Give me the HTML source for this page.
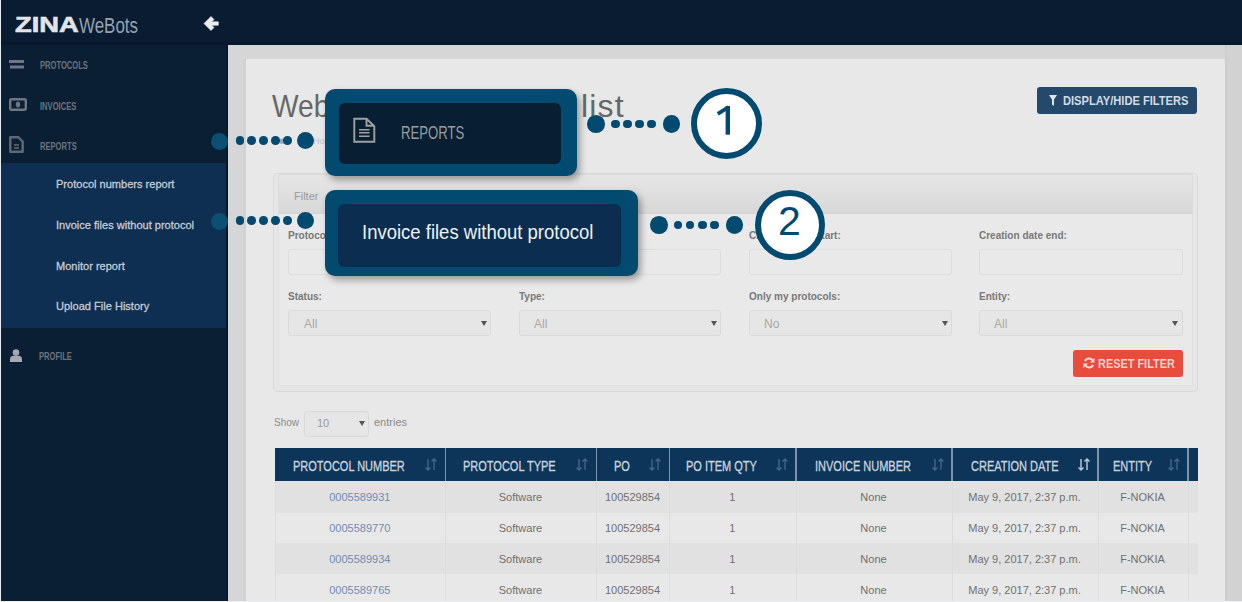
<!DOCTYPE html>
<html><head><meta charset="utf-8">
<style>
*{margin:0;padding:0;box-sizing:border-box}
html,body{width:1242px;height:602px;overflow:hidden;background:#d6d6d6;font-family:"Liberation Sans",sans-serif}
.a{position:absolute}
.t{position:absolute;white-space:nowrap;line-height:1}
#topbar{left:0;top:0;width:1242px;height:45px;background:#091c31}
#sidebar{left:0;top:45px;width:228px;height:557px;background:#0a1f34}
#leftline{left:0;top:0;width:1px;height:602px;background:#e8ecef}
#submenu{left:1px;top:163px;width:227px;height:165px;background:#0e2f51}
#scrollstrip{left:1225px;top:45px;width:17px;height:557px;background:#d2d2d2}
#card{left:246px;top:59px;width:979px;height:543px;background:#e8e8e8}
.side{color:#6c737c;font-size:11px;font-weight:bold;transform-origin:0 0;transform:scaleX(0.69)}
.sub{color:#c4ccd7;font-size:11.5px;font-weight:normal;-webkit-text-stroke:0.3px #c4ccd7;transform-origin:0 0;transform:scaleX(0.96)}
.lbl{color:#787878;font-size:11px;font-weight:bold;transform-origin:0 0;transform:scaleX(0.91)}
.inp{position:absolute;background:#e9e9e9;border:1px solid #dcdcdc;border-radius:3px}
.sel{position:absolute;background:#e6e6e6;border:1px solid #dadada;border-radius:3px}
.selv{position:absolute;color:#a8a8a8;font-size:12px;line-height:1}
.caret{position:absolute;width:0;height:0;border-left:3px solid transparent;border-right:3px solid transparent;border-top:5px solid #555}
.th{position:absolute;color:#c8d3de;font-size:15px;font-weight:normal;-webkit-text-stroke:0.35px #c8d3de;line-height:1;transform-origin:0 0;transform:scaleX(0.733)}
.td{position:absolute;color:#808080;font-size:11px;line-height:1;transform-origin:0 0}
.dot{position:absolute;border-radius:50%;background:#034a70}
</style></head><body>
<div id="topbar" class="a"></div>
<div id="sidebar" class="a"></div>
<div id="submenu" class="a"></div>
<div id="leftline" class="a"></div>
<div id="scrollstrip" class="a"></div>
<div class="a" style="left:1225px;top:45px;width:2px;height:557px;background:#cdcdcd"></div>
<div id="card" class="a"></div>
<div class="a" style="left:1px;top:42px;width:1241px;height:3px;background:#07182b"></div>
<div class="a" style="left:226px;top:45px;width:2px;height:557px;background:#06182b"></div>
<div class="a" style="left:243px;top:59px;width:3px;height:543px;background:#d2d2d2"></div>

<!-- logo -->
<div id="logo1" class="t" style="left:14.5px;top:14px;font-size:22px;font-weight:bold;color:#e2e4e8;transform-origin:0 0;transform:scaleX(1.24);-webkit-text-stroke:0.6px #e2e4e8">ZINA</div>
<div id="logo2" class="t" style="left:78.5px;top:14.5px;font-size:22px;color:#95a2b1;transform-origin:0 0;transform:scaleX(0.77)">WeBots</div>
<svg class="a" style="left:196px;top:10px" width="30" height="30" viewBox="196 10 30 30"><path d="M204 23.5L211 16.5L214 19.5L211.8 21.8H218.3V25.2H211.8L214 27.5L211 30.5Z" fill="#eceef0" stroke="#eceef0" stroke-width="0.6" stroke-linejoin="round"/></svg>
<!-- menu -->
<svg class="a" style="left:9px;top:59px" width="16" height="11" viewBox="0 0 16 11"><path d="M0 2.5H15M1 8H15" stroke="#6e7782" stroke-width="3"/></svg>
<div id="m1" class="t side" style="left:40px;top:60px">PROTOCOLS</div>
<svg class="a" style="left:9px;top:98px" width="18" height="13" viewBox="0 0 18 13"><rect x="1.2" y="1.2" width="15.6" height="10.6" rx="1.5" fill="none" stroke="#6e7782" stroke-width="2.4"/><ellipse cx="9" cy="6.5" rx="2.2" ry="3" fill="#6e7782"/></svg>
<div id="m2" class="t side" style="left:40px;top:101px">INVOICES</div>
<svg class="a" style="left:9px;top:136px" width="15" height="17" viewBox="0 0 15 17"><path d="M1.3 1.3H9.5L13.7 5.5V15.7H1.3Z" fill="none" stroke="#5f6873" stroke-width="2.4" stroke-linejoin="round"/><path d="M5 9H10M5 12H10" stroke="#4f5863" stroke-width="1.8"/></svg>
<div id="m3" class="t side" style="left:40px;top:141px">REPORTS</div>
<div id="s1" class="t sub" style="left:56px;top:179px">Protocol numbers report</div>
<div id="s2" class="t sub" style="left:56px;top:220px">Invoice files without protocol</div>
<div id="s3" class="t sub" style="left:56px;top:261px">Monitor report</div>
<div id="s4" class="t sub" style="left:56px;top:301px">Upload File History</div>
<svg class="a" style="left:9.5px;top:349px" width="12" height="13" viewBox="0 0 12 13"><circle cx="6" cy="3.6" r="3.3" fill="#a3a9b1"/><path d="M0 13V10.5Q0 6.8 3.5 6.8H8.5Q12 6.8 12 10.5V13Z" fill="#a3a9b1"/></svg>
<div id="m4" class="t side" style="left:39px;top:351px">PROFILE</div>

<!-- title -->
<div id="title1" class="t" style="left:272px;top:89.5px;font-size:32px;color:#676767;transform-origin:0 0;transform:scaleX(0.88)">Web</div>
<div id="title2" class="t" style="left:581px;top:89.5px;font-size:32px;color:#676767;letter-spacing:1.2px">list</div>
<div class="t" style="left:279px;top:136px;font-size:10px;color:#8fa6bf">&#9632;</div>
<div class="t" style="left:313px;top:137px;font-size:9px;color:#b9c3ce">Home</div>
<!-- display/hide -->
<div class="a" style="left:1037px;top:87px;width:160px;height:27px;background:#24496b;border-radius:3px"></div>
<svg class="a" style="left:1049px;top:95px" width="8" height="11" viewBox="0 0 8 11"><path d="M0 0H8L5 4.5V11L3 9.5V4.5Z" fill="#dfe6ee"/></svg>
<div id="dbtn" class="t" style="left:1062.5px;top:94px;font-size:13.5px;font-weight:bold;color:#d3dce6;transform-origin:0 0;transform:scaleX(0.824)">DISPLAY/HIDE FILTERS</div>
<!-- filter panel -->
<div class="a" style="left:273px;top:172.5px;width:925px;height:219px;border:1px solid #dadada;border-radius:4px;background:#e9e9e9;box-shadow:inset 0 0 0 5px #e6e6e6"></div>
<div class="a" style="left:278px;top:173.5px;width:915px;height:40.5px;background:linear-gradient(#e5e5e5,#d8d8d8);border:1px solid #dcdcdc;border-bottom-color:#d3d3d3;border-radius:3px 3px 0 0"></div>
<div class="a" style="left:278px;top:214px;width:915px;height:172px;border:1px solid #e0e0e0;border-top:none"></div>
<div id="filt" class="t" style="left:294px;top:191px;font-size:11px;color:#9a9a9a">Filter</div>
<div id="l1" class="t lbl" style="left:288px;top:230px">Protocol number:</div>
<div id="l3" class="t lbl" style="left:749px;top:230px">Creation date start:</div>
<div id="l4" class="t lbl" style="left:979px;top:230px">Creation date end:</div>
<div class="inp" style="left:288px;top:249px;width:203px;height:26px"></div>
<div class="inp" style="left:519px;top:249px;width:202px;height:26px"></div>
<div class="inp" style="left:749px;top:249px;width:203px;height:26px"></div>
<div class="inp" style="left:979px;top:249px;width:204px;height:26px"></div>
<div id="l5" class="t lbl" style="left:288px;top:291px">Status:</div>
<div id="l6" class="t lbl" style="left:519px;top:291px">Type:</div>
<div id="l7" class="t lbl" style="left:749px;top:291px">Only my protocols:</div>
<div id="l8" class="t lbl" style="left:979px;top:291px">Entity:</div>
<div class="sel" style="left:288px;top:310px;width:203px;height:26px"></div>
<div class="sel" style="left:519px;top:310px;width:202px;height:26px"></div>
<div class="sel" style="left:749px;top:310px;width:203px;height:26px"></div>
<div class="sel" style="left:979px;top:310px;width:204px;height:26px"></div>
<div class="selv" style="left:304px;top:318px">All</div>
<div class="selv" style="left:534px;top:318px">All</div>
<div class="selv" style="left:764px;top:318px">No</div>
<div class="selv" style="left:994px;top:318px">All</div>
<div class="caret" style="left:481px;top:321px"></div>
<div class="caret" style="left:711px;top:321px"></div>
<div class="caret" style="left:942px;top:321px"></div>
<div class="caret" style="left:1172px;top:321px"></div>
<!-- reset -->
<div class="a" style="left:1073px;top:350px;width:110px;height:27px;background:#e84c3d;border-radius:3px"></div>
<svg class="a" style="left:1083px;top:357px" width="12" height="12" viewBox="0 0 12 12"><path d="M10 4.5A4.3 4.3 0 0 0 2 4.2M2 7.5A4.3 4.3 0 0 0 10 7.8" stroke="#f6dcd8" stroke-width="2" fill="none"/><path d="M11.5 1V5.5H7Z M0.5 11V6.5H5Z" fill="#f6dcd8"/></svg>
<div id="rbtn" class="t" style="left:1097.5px;top:357.5px;font-size:12px;font-weight:bold;color:#f4d2cc;transform-origin:0 0;transform:scaleX(0.91)">RESET FILTER</div>
<!-- show entries -->
<div id="show" class="t" style="left:274px;top:417px;font-size:11px;color:#8a8a8a;transform-origin:0 0;transform:scaleX(0.91)">Show</div>
<div class="sel" style="left:304px;top:411px;width:65px;height:26px"></div>
<div class="selv" style="left:317px;top:418px;font-size:11px;color:#9a9a9a">10</div>
<div class="caret" style="left:359px;top:421px"></div>
<div id="entr" class="t" style="left:374px;top:417px;font-size:11px;color:#8a8a8a">entries</div>

<!-- table -->
<div class="a" style="left:274.7px;top:448px;width:923px;height:32.5px;background:#0d3459"></div>
<div class="a" style="left:444.5px;top:448px;width:1.5px;height:32.5px;background:#7f93a8"></div>
<div class="a" style="left:595.5px;top:448px;width:1.5px;height:32.5px;background:#7f93a8"></div>
<div class="a" style="left:668.5px;top:448px;width:1.5px;height:32.5px;background:#7f93a8"></div>
<div class="a" style="left:795.0px;top:448px;width:1.5px;height:32.5px;background:#7f93a8"></div>
<div class="a" style="left:951.0px;top:448px;width:1.5px;height:32.5px;background:#7f93a8"></div>
<div class="a" style="left:1097.0px;top:448px;width:1.5px;height:32.5px;background:#7f93a8"></div>
<div class="a" style="left:1187.0px;top:448px;width:1.5px;height:32.5px;background:#7f93a8"></div>
<div class="a" style="left:274.7px;top:480.5px;width:923px;height:32.299999999999955px;background:#e1e1e1"></div>
<div class="a" style="left:274.7px;top:512.8px;width:923px;height:29.800000000000068px;background:#e8e8e8"></div>
<div class="a" style="left:274.7px;top:542.6px;width:923px;height:31.600000000000023px;background:#e1e1e1"></div>
<div class="a" style="left:274.7px;top:574.2px;width:923px;height:30.799999999999955px;background:#e8e8e8"></div>
<div class="a" style="left:274.7px;top:480.5px;width:1px;height:122px;background:#dcdcdc"></div>
<div class="a" style="left:445px;top:480.5px;width:1px;height:122px;background:#dcdcdc"></div>
<div class="a" style="left:596px;top:480.5px;width:1px;height:122px;background:#dcdcdc"></div>
<div class="a" style="left:669px;top:480.5px;width:1px;height:122px;background:#dcdcdc"></div>
<div class="a" style="left:795.5px;top:480.5px;width:1px;height:122px;background:#dcdcdc"></div>
<div class="a" style="left:951.5px;top:480.5px;width:1px;height:122px;background:#dcdcdc"></div>
<div class="a" style="left:1097.5px;top:480.5px;width:1px;height:122px;background:#dcdcdc"></div>
<div class="a" style="left:1187.5px;top:480.5px;width:1px;height:122px;background:#dcdcdc"></div>
<div id="h0" class="th" style="top:457.5px;left:293px">PROTOCOL NUMBER</div>
<svg class="a" style="left:425px;top:458px" width="12" height="13" viewBox="0 0 12 13"><path d="M3 1V12M0.5 9.5L3 12L5.5 9.5M9 12V1M6.5 3.5L9 1L11.5 3.5" stroke="#43658a" stroke-width="1.4" fill="none"/></svg>
<div id="h1" class="th" style="top:457.5px;left:463px">PROTOCOL TYPE</div>
<svg class="a" style="left:576px;top:458px" width="12" height="13" viewBox="0 0 12 13"><path d="M3 1V12M0.5 9.5L3 12L5.5 9.5M9 12V1M6.5 3.5L9 1L11.5 3.5" stroke="#43658a" stroke-width="1.4" fill="none"/></svg>
<div id="h2" class="th" style="top:457.5px;left:614px">PO</div>
<svg class="a" style="left:649px;top:458px" width="12" height="13" viewBox="0 0 12 13"><path d="M3 1V12M0.5 9.5L3 12L5.5 9.5M9 12V1M6.5 3.5L9 1L11.5 3.5" stroke="#43658a" stroke-width="1.4" fill="none"/></svg>
<div id="h3" class="th" style="top:457.5px;left:686px">PO ITEM QTY</div>
<svg class="a" style="left:776px;top:458px" width="12" height="13" viewBox="0 0 12 13"><path d="M3 1V12M0.5 9.5L3 12L5.5 9.5M9 12V1M6.5 3.5L9 1L11.5 3.5" stroke="#43658a" stroke-width="1.4" fill="none"/></svg>
<div id="h4" class="th" style="top:457.5px;left:815px">INVOICE NUMBER</div>
<svg class="a" style="left:932px;top:458px" width="12" height="13" viewBox="0 0 12 13"><path d="M3 1V12M0.5 9.5L3 12L5.5 9.5M9 12V1M6.5 3.5L9 1L11.5 3.5" stroke="#43658a" stroke-width="1.4" fill="none"/></svg>
<div id="h5" class="th" style="top:457.5px;left:971px">CREATION DATE</div>
<svg class="a" style="left:1078px;top:458px" width="12" height="13" viewBox="0 0 12 13"><path d="M3 1V12M0.5 9.5L3 12L5.5 9.5M9 12V1M6.5 3.5L9 1L11.5 3.5" stroke="#b5c3d2" stroke-width="1.5" fill="none"/></svg>
<div id="h6" class="th" style="top:457.5px;left:1113px">ENTITY</div>
<svg class="a" style="left:1168px;top:458px" width="12" height="13" viewBox="0 0 12 13"><path d="M3 1V12M0.5 9.5L3 12L5.5 9.5M9 12V1M6.5 3.5L9 1L11.5 3.5" stroke="#43658a" stroke-width="1.4" fill="none"/></svg>
<div class="td" style="left:259.85px;width:200px;text-align:center;top:492.4px;color:#6f8db4">0005589931</div>
<div class="td" style="left:420.5px;width:200px;text-align:center;top:492.4px;color:#707070">Software</div>
<div class="td" style="left:532.5px;width:200px;text-align:center;top:492.4px;color:#707070">100529854</div>
<div class="td" style="left:632.25px;width:200px;text-align:center;top:492.4px;color:#707070">1</div>
<div class="td" style="left:773.5px;width:200px;text-align:center;top:492.4px;color:#707070">None</div>
<div class="td" style="left:924.5px;width:200px;text-align:center;top:492.4px;color:#707070">May 9, 2017, 2:37 p.m.</div>
<div class="td" style="left:1042.5px;width:200px;text-align:center;top:492.4px;color:#707070">F-NOKIA</div>
<div class="td" style="left:259.85px;width:200px;text-align:center;top:523.0px;color:#6f8db4">0005589770</div>
<div class="td" style="left:420.5px;width:200px;text-align:center;top:523.0px;color:#707070">Software</div>
<div class="td" style="left:532.5px;width:200px;text-align:center;top:523.0px;color:#707070">100529854</div>
<div class="td" style="left:632.25px;width:200px;text-align:center;top:523.0px;color:#707070">1</div>
<div class="td" style="left:773.5px;width:200px;text-align:center;top:523.0px;color:#707070">None</div>
<div class="td" style="left:924.5px;width:200px;text-align:center;top:523.0px;color:#707070">May 9, 2017, 2:37 p.m.</div>
<div class="td" style="left:1042.5px;width:200px;text-align:center;top:523.0px;color:#707070">F-NOKIA</div>
<div class="td" style="left:259.85px;width:200px;text-align:center;top:553.9px;color:#6f8db4">0005589934</div>
<div class="td" style="left:420.5px;width:200px;text-align:center;top:553.9px;color:#707070">Software</div>
<div class="td" style="left:532.5px;width:200px;text-align:center;top:553.9px;color:#707070">100529854</div>
<div class="td" style="left:632.25px;width:200px;text-align:center;top:553.9px;color:#707070">1</div>
<div class="td" style="left:773.5px;width:200px;text-align:center;top:553.9px;color:#707070">None</div>
<div class="td" style="left:924.5px;width:200px;text-align:center;top:553.9px;color:#707070">May 9, 2017, 2:37 p.m.</div>
<div class="td" style="left:1042.5px;width:200px;text-align:center;top:553.9px;color:#707070">F-NOKIA</div>
<div class="td" style="left:259.85px;width:200px;text-align:center;top:584.6px;color:#6f8db4">0005589765</div>
<div class="td" style="left:420.5px;width:200px;text-align:center;top:584.6px;color:#707070">Software</div>
<div class="td" style="left:532.5px;width:200px;text-align:center;top:584.6px;color:#707070">100529854</div>
<div class="td" style="left:632.25px;width:200px;text-align:center;top:584.6px;color:#707070">1</div>
<div class="td" style="left:773.5px;width:200px;text-align:center;top:584.6px;color:#707070">None</div>
<div class="td" style="left:924.5px;width:200px;text-align:center;top:584.6px;color:#707070">May 9, 2017, 2:37 p.m.</div>
<div class="td" style="left:1042.5px;width:200px;text-align:center;top:584.6px;color:#707070">F-NOKIA</div>

<!-- overlays -->
<div class="a" style="left:325px;top:88.5px;width:252px;height:87px;background:#034a70;border-radius:10px;box-shadow:3px 4px 7px rgba(0,0,0,0.35)"></div>
<div class="a" style="left:339px;top:102.5px;width:222px;height:61.5px;background:#071e33;border-radius:6px"></div>
<svg class="a" style="left:352px;top:117px" width="24" height="27" viewBox="0 0 24 27"><path d="M2.3 1.8H14.5L22.3 9.2V24.8H2.3Z M14.5 1.8V8.8H22.3" fill="none" stroke="#a0a0a0" stroke-width="1.9" stroke-linejoin="miter"/><path d="M7 12.7H17.5M7 15.8H17.5M7 19.3H17.5" stroke="#a0a0a0" stroke-width="1.6"/></svg>
<div id="rep" class="t" style="left:401px;top:124px;font-size:18px;color:#9c9c9c;transform-origin:0 0;transform:scaleX(0.73)">REPORTS</div>

<div class="a" style="left:325px;top:189.5px;width:313px;height:86.5px;background:#034a70;border-radius:10px;box-shadow:3px 4px 7px rgba(0,0,0,0.35)"></div>
<div class="a" style="left:338px;top:203.5px;width:283px;height:63px;background:#0b2e50;border-radius:6px"></div>
<div id="inv" class="t" style="left:362px;top:222px;font-size:20px;color:#eef2f6;transform-origin:0 0;transform:scaleX(0.925)">Invoice files without protocol</div>
<div class="dot" style="left:211px;top:132.5px;width:17px;height:17px;background:#0b4f72"></div>
<div class="dot" style="left:211px;top:212.5px;width:17px;height:17px;background:#0b4f72"></div>
<div class="dot" style="left:235.5px;top:136.2px;width:8.6px;height:8.6px"></div>
<div class="dot" style="left:247.29999999999998px;top:136.2px;width:8.6px;height:8.6px"></div>
<div class="dot" style="left:259.2px;top:136.2px;width:8.6px;height:8.6px"></div>
<div class="dot" style="left:271.2px;top:136.2px;width:8.6px;height:8.6px"></div>
<div class="dot" style="left:283.0px;top:136.2px;width:8.6px;height:8.6px"></div>
<div class="dot" style="left:296.7px;top:131.7px;width:17.6px;height:17.6px"></div>
<div class="dot" style="left:235.5px;top:216.1px;width:8.6px;height:8.6px"></div>
<div class="dot" style="left:247.29999999999998px;top:216.1px;width:8.6px;height:8.6px"></div>
<div class="dot" style="left:259.2px;top:216.1px;width:8.6px;height:8.6px"></div>
<div class="dot" style="left:271.2px;top:216.1px;width:8.6px;height:8.6px"></div>
<div class="dot" style="left:283.0px;top:216.1px;width:8.6px;height:8.6px"></div>
<div class="dot" style="left:296.7px;top:211.6px;width:17.6px;height:17.6px"></div>
<div class="dot" style="left:611.0px;top:119.5px;width:8.6px;height:8.6px"></div>
<div class="dot" style="left:623.0px;top:119.5px;width:8.6px;height:8.6px"></div>
<div class="dot" style="left:635.1px;top:119.5px;width:8.6px;height:8.6px"></div>
<div class="dot" style="left:647.2px;top:119.5px;width:8.6px;height:8.6px"></div>
<div class="dot" style="left:587.1px;top:115.0px;width:17.6px;height:17.6px"></div>
<div class="dot" style="left:662.8000000000001px;top:115.0px;width:17.6px;height:17.6px"></div>
<div class="dot" style="left:673.9000000000001px;top:220.5px;width:8.6px;height:8.6px"></div>
<div class="dot" style="left:685.9000000000001px;top:220.5px;width:8.6px;height:8.6px"></div>
<div class="dot" style="left:698.1px;top:220.5px;width:8.6px;height:8.6px"></div>
<div class="dot" style="left:710.2px;top:220.5px;width:8.6px;height:8.6px"></div>
<div class="dot" style="left:650.0px;top:216.0px;width:17.6px;height:17.6px"></div>
<div class="dot" style="left:725.7px;top:216.0px;width:17.6px;height:17.6px"></div>
<div class="a" style="left:691px;top:88px;width:71px;height:71px;border-radius:50%;border:6px solid #034a70;background:#fff"></div>
<svg class="a" style="left:700px;top:100px" width="40" height="40" viewBox="700 100 40 40"><path d="M727.8 106V134.7" stroke="#034a70" stroke-width="4.4"/><path d="M728.5 107.2L717.8 113.8" stroke="#034a70" stroke-width="3.8"/></svg>
<div class="a" style="left:754.5px;top:189.5px;width:70px;height:70px;border-radius:50%;border:6px solid #034a70;background:#fff"></div>
<div id="n2" class="t" style="left:778px;top:201px;font-size:41px;color:#034a70">2</div>

<div class="a" style="left:0;top:601px;width:1242px;height:1px;background:#eef0f2"></div>
</body></html>
